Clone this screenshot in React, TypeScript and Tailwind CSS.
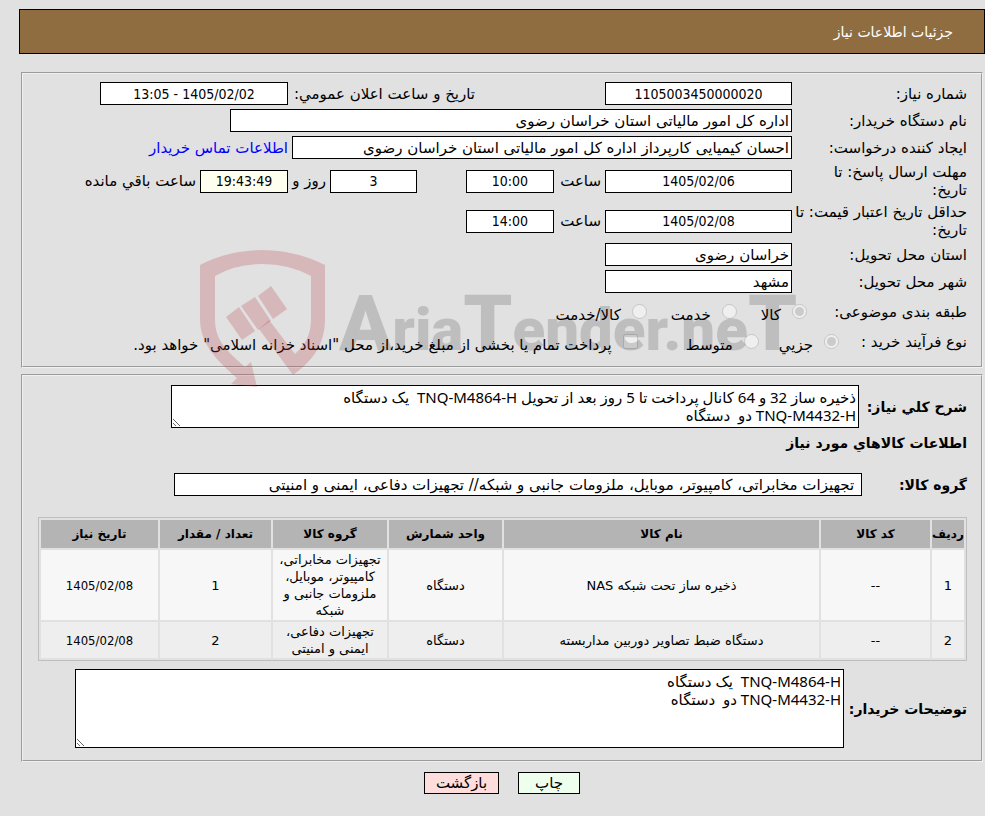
import type { ReactNode } from 'react';
import clsx from 'clsx';

const items = [
  {
    code: '--',
    name: 'ذخیره ساز تحت شبکه NAS',
    unit: 'دستگاه',
    group: 'تجهیزات مخابراتی، کامپیوتر، موبایل، ملزومات جانبی و شبکه',
    count: '1',
    date: '1405/02/08',
  },
  {
    code: '--',
    name: 'دستگاه ضبط تصاویر دوربین مداربسته',
    unit: 'دستگاه',
    group: 'تجهیزات دفاعی، ایمنی و امنیتی',
    count: '2',
    date: '1405/02/08',
  },
];

const columns = [
  { title: 'ردیف', width: 'w-8' },
  { title: 'کد کالا', width: 'w-[109px]' },
  { title: 'نام کالا', width: '' },
  { title: 'واحد شمارش', width: 'w-[113px]' },
  { title: 'گروه کالا', width: 'w-[114px]' },
  { title: 'تعداد / مقدار', width: 'w-[111px]' },
  { title: 'تاریخ نیاز', width: 'w-[117px]' },
];

const description =
  'ذخیره ساز 32 و 64 کانال پرداخت تا 5 روز بعد از تحویل TNQ-M4864-H  یک دستگاه\nTNQ-M4432-H دو  دستگاه';
const buyerNotes = 'TNQ-M4864-H  یک دستگاه\nTNQ-M4432-H دو  دستگاه';

const numeric = "text-center text-[14px] font-['DejaVu_Sans_Condensed','DejaVu_Sans',sans-serif]";
const area =
  "pt-0.5 px-0.5 border border-black bg-white overflow-hidden resize font-['Noto_Sans','DejaVu_Sans',sans-serif]";

function Box({ id, value, label, className }: { id: string; value: string; label?: string; className?: string }) {
  return (
    <input
      id={id}
      aria-label={label}
      readOnly
      defaultValue={value}
      className={clsx('h-[23px] shrink-0 border border-black px-0.5', className)}
    />
  );
}

function Row({ id, label, children }: { id: string; label: string; children: ReactNode }) {
  return (
    <div className="flex items-center min-h-[23px]">
      <label htmlFor={id} className="w-[175px] shrink-0 whitespace-pre-line">{label}</label>
      {children}
    </div>
  );
}

function Option({ name, label, checked, type = 'radio' }: { name: string; label: string; checked?: boolean; type?: string }) {
  return (
    <label className="flex items-start gap-[11px] whitespace-nowrap">
      <input type={type} name={name} defaultChecked={checked} disabled className="size-[15px] mt-px shrink-0" />
      <span className="pt-[3px]">{label}</span>
    </label>
  );
}

function Watermark() {
  return (
    <svg
      viewBox="0 0 620 140"
      className="absolute left-[177px] top-[175px] w-[620px] h-[140px] pointer-events-none"
      direction="ltr"
      aria-hidden="true"
    >
      <g fill="#bc4048" fillOpacity="0.25">
        <path d="M0 16Q29 1 62 1T125 16V70C125 95 113 112 93 126L59 80L69 71L95 105C105 96 111 86 111 70V27Q89 15 62 15T15 27V70C15 92 27 102 45 118L51 113L57 138L31 135L37 129C16 111 0 94 0 70Z" />
        <path d="M26 68L39 58L55 82L42 91ZM41 57L55 48L71 72L58 81ZM58 47L71 37L87 60L73 70Z" />
      </g>
      <text x="139" y="101" fill="#000" opacity="0.15" className="font-black" fontFamily="Roboto, sans-serif">
        <tspan fontSize="78">A</tspan>
        <tspan fontSize="60">ria</tspan>
        <tspan fontSize="78">T</tspan>
        <tspan fontSize="60">ender.ne</tspan>
        <tspan fontSize="78">T</tspan>
      </text>
    </svg>
  );
}

export default function App() {
  return (
    <div
      dir="rtl"
      className="min-h-screen bg-[#e1e1e1] pt-[9px] text-black text-[15px] leading-[18px] font-['DejaVu_Sans',sans-serif]"
    >
      <header className="flex items-center h-[45px] ml-[19px] pr-[31px] border border-black bg-[#8f6d40] text-white text-[14px]">
        <h1>جزئیات اطلاعات نیاز</h1>
      </header>

      <main className="ml-[21px] mr-[2px] mt-[18px]">
        <section className="relative flex flex-col gap-1 pt-2 pb-3 pr-3.5 border-2 [border-style:groove] border-[#f0f0f0]">
          <Row id="number" label="شماره نیاز:">
            <Box id="number" value="1105003450000020" className={clsx('w-[187px] bg-white', numeric)} />
            <label htmlFor="announce" className="w-[317px] pr-[130px] shrink-0 whitespace-nowrap">
              تاریخ و ساعت اعلان عمومي:
            </label>
            <Box id="announce" value="1405/02/02 - 13:05" className={clsx('w-[188px] bg-white', numeric)} />
          </Row>
          <Row id="buyer" label="نام دستگاه خریدار:">
            <Box id="buyer" value="اداره کل امور مالیاتی استان خراسان رضوی" className="w-[562px] bg-white" />
          </Row>
          <Row id="creator" label="ایجاد کننده درخواست:">
            <Box
              id="creator"
              value="احسان کیمیایی کارپرداز اداره کل امور مالیاتی استان خراسان رضوی"
              className="w-[500px] bg-white"
            />
            <a href="#" className="mr-1 text-[#0000ff] whitespace-nowrap">اطلاعات تماس خریدار</a>
          </Row>
          <Row id="deadline" label={'مهلت ارسال پاسخ: تا\nتاریخ:'}>
            <Box id="deadline" value="1405/02/06" className={clsx('w-[187px] bg-white', numeric)} />
            <label htmlFor="deadline-time" className="w-[51px] pr-1 shrink-0">ساعت</label>
            <Box id="deadline-time" value="10:00" className={clsx('w-[88px] bg-white', numeric)} />
            <Box id="days" label="روز" value="3" className={clsx('w-[87px] mr-[49px] bg-white', numeric)} />
            <label htmlFor="hours" className="w-[42px] pr-1 shrink-0 whitespace-nowrap">روز و</label>
            <Box id="hours" value="19:43:49" className={clsx('w-[88px] bg-[#fffff0]', numeric)} />
            <span className="mr-1 whitespace-nowrap">ساعت باقي مانده</span>
          </Row>
          <Row id="validity" label={'حداقل تاریخ اعتبار قیمت: تا\nتاریخ:'}>
            <Box id="validity" value="1405/02/08" className={clsx('w-[187px] bg-white', numeric)} />
            <label htmlFor="validity-time" className="w-[51px] pr-1 shrink-0">ساعت</label>
            <Box id="validity-time" value="14:00" className={clsx('w-[88px] bg-white', numeric)} />
          </Row>
          <Row id="province" label="استان محل تحویل:">
            <Box id="province" value="خراسان رضوی" className="w-[187px] bg-white" />
          </Row>
          <Row id="city" label="شهر محل تحویل:">
            <Box id="city" value="مشهد" className="w-[187px] bg-white" />
          </Row>
          <div className="flex items-start pt-1.5">
            <span className="w-[160px] shrink-0">طبقه بندی موضوعی:</span>
            <div className="flex gap-6">
              <Option name="category" label="کالا" checked />
              <Option name="category" label="خدمت" />
              <Option name="category" label="کالا/خدمت" />
            </div>
          </div>
          <div className="flex items-start pt-[5px]">
            <span className="w-[128px] shrink-0">نوع فرآیند خرید :</span>
            <div className="flex gap-5">
              <Option name="process" label="جزیي" checked />
              <Option name="process" label="متوسط" />
            </div>
            <div className="mr-12">
              <Option
                name="treasury"
                type="checkbox"
                label={'پرداخت تمام یا بخشی از مبلغ خرید،از محل "اسناد خزانه اسلامی" خواهد بود.'}
              />
            </div>
          </div>
          <Watermark />
        </section>

        <section className="mt-1.5 pt-[9px] pb-3 pr-3.5 pl-[15px] border-2 [border-style:groove] border-[#f0f0f0]">
          <div className="flex items-center">
            <label htmlFor="description" className="w-[108px] shrink-0 text-[14px] font-bold">شرح کلي نیاز:</label>
            <textarea
              id="description"
              readOnly
              defaultValue={description}
              className={clsx('w-[688px] h-[43px]', area)}
            />
          </div>
          <h2 className="mt-1.5 text-[14px] leading-[18px] font-bold">اطلاعات کالاهاي مورد نیاز</h2>
          <div className="flex items-center mt-[21px]">
            <label htmlFor="group" className="w-[105px] shrink-0 text-[14px] font-bold">گروه کالا:</label>
            <Box
              id="group"
              value=" تجهیزات مخابراتی، کامپیوتر، موبایل، ملزومات جانبی و شبکه// تجهیزات دفاعی، ایمنی و امنیتی"
              className="w-[688px] bg-white"
            />
          </div>

          <table className="w-full mt-[21px] table-fixed border-separate border-spacing-[2px] border border-[#bebebe] text-[13px] leading-[17px] text-center">
            <thead>
              <tr className="h-7 bg-[#b4b4b4]">
                {columns.map((c) => (
                  <th key={c.title} className={clsx('p-0 whitespace-nowrap text-[12px]', c.width)}>{c.title}</th>
                ))}
              </tr>
            </thead>
            <tbody>
              {items.map((item, i) => (
                <tr key={item.name} className={i % 2 ? 'bg-[#eeeeee]' : 'bg-[#f7f7f7]'}>
                  <td>{i + 1}</td>
                  <td>{item.code}</td>
                  <td>{item.name}</td>
                  <td>{item.unit}</td>
                  <td className="px-0.5 py-px">{item.group}</td>
                  <td>{item.count}</td>
                  <td className="font-['DejaVu_Sans_Condensed','DejaVu_Sans',sans-serif]">{item.date}</td>
                </tr>
              ))}
            </tbody>
          </table>

          <div className="flex items-center mt-2">
            <label htmlFor="notes" className="w-[123px] shrink-0 text-[14px] font-bold">توضیحات خریدار:</label>
            <textarea
              id="notes"
              readOnly
              defaultValue={buyerNotes}
              className={clsx('w-[769px] h-[79px]', area)}
            />
          </div>
        </section>
      </main>

      <div className="flex justify-center gap-[19px] mt-2.5 pl-[19px]">
        <button type="button" className="w-[62px] h-[22px] border border-black bg-[#eeffee]">چاپ</button>
        <button type="button" className="w-[75px] h-[22px] border border-black bg-[#ffdddd]">بازگشت</button>
      </div>
    </div>
  );
}
